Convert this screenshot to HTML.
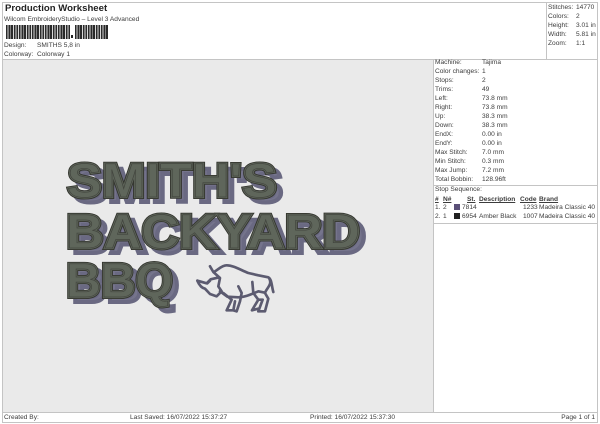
<!DOCTYPE html>
<html><head><meta charset="utf-8"><style>
html,body{margin:0;padding:0;background:#fff}
#p{position:relative;width:600px;height:424px;overflow:hidden;background:#fff;font-family:"Liberation Sans",sans-serif;font-size:6.6px;color:#3c3c3c}
#p div{position:absolute;white-space:nowrap;line-height:9px}
.l{background:#c4c4c4}
u{font-weight:bold}
.b{background:repeating-linear-gradient(90deg,#2a2a2a 0,#2a2a2a 1.7px,#d8d8d8 1.7px,#d8d8d8 2.6px)}
</style></head><body><div id="p">
<div class="l" style="left:2px;top:2px;width:596px;height:1px"></div>
<div class="l" style="left:2px;top:422px;width:596px;height:1px"></div>
<div class="l" style="left:2px;top:2px;width:1px;height:421px"></div>
<div class="l" style="left:597px;top:2px;width:1px;height:421px"></div>
<div style="left:3px;top:59px;width:430px;height:353px;background:#eaeaea"></div>
<div class="l" style="left:3px;top:59px;width:594px;height:1px"></div>
<div class="l" style="left:3px;top:412px;width:594px;height:1px"></div>
<div class="l" style="left:546px;top:2px;width:1px;height:57px"></div>
<div class="l" style="left:433px;top:59px;width:1px;height:353px"></div>
<div class="l" style="left:433px;top:185px;width:164px;height:1px"></div>
<div class="l" style="left:433px;top:223px;width:164px;height:1px"></div>

<div style="left:5px;top:3px;font-size:9.6px;line-height:12px;font-weight:bold;color:#222">Production Worksheet</div>
<div style="left:4px;top:15px">Wilcom EmbroideryStudio – Level 3 Advanced</div>
<div class="b" style="left:6px;top:25px;width:64px;height:14px"></div>
<div style="left:71px;top:35px;width:1.5px;height:3px;background:#222"></div>
<div class="b" style="left:75px;top:25px;width:33px;height:14px"></div>
<div style="left:4px;top:41px">Design:</div><div style="left:37px;top:41px">SMITHS 5,8 in</div>
<div style="left:4px;top:50px">Colorway:</div><div style="left:37px;top:50px">Colorway 1</div>

<div style="left:548px;top:3px">Stitches:</div><div style="left:576px;top:3px">14770</div>
<div style="left:548px;top:12px">Colors:</div><div style="left:576px;top:12px">2</div>
<div style="left:548px;top:21px">Height:</div><div style="left:576px;top:21px">3.01 in</div>
<div style="left:548px;top:30px">Width:</div><div style="left:576px;top:30px">5.81 in</div>
<div style="left:548px;top:39px">Zoom:</div><div style="left:576px;top:39px">1:1</div>

<div style="left:435px;top:58px">Machine:</div><div style="left:482px;top:58px">Tajima</div>
<div style="left:435px;top:67px">Color changes:</div><div style="left:482px;top:67px">1</div>
<div style="left:435px;top:76px">Stops:</div><div style="left:482px;top:76px">2</div>
<div style="left:435px;top:85px">Trims:</div><div style="left:482px;top:85px">49</div>
<div style="left:435px;top:94px">Left:</div><div style="left:482px;top:94px">73.8 mm</div>
<div style="left:435px;top:103px">Right:</div><div style="left:482px;top:103px">73.8 mm</div>
<div style="left:435px;top:112px">Up:</div><div style="left:482px;top:112px">38.3 mm</div>
<div style="left:435px;top:121px">Down:</div><div style="left:482px;top:121px">38.3 mm</div>
<div style="left:435px;top:130px">EndX:</div><div style="left:482px;top:130px">0.00 in</div>
<div style="left:435px;top:139px">EndY:</div><div style="left:482px;top:139px">0.00 in</div>
<div style="left:435px;top:148px">Max Stitch:</div><div style="left:482px;top:148px">7.0 mm</div>
<div style="left:435px;top:157px">Min Stitch:</div><div style="left:482px;top:157px">0.3 mm</div>
<div style="left:435px;top:166px">Max Jump:</div><div style="left:482px;top:166px">7.2 mm</div>
<div style="left:435px;top:175px">Total Bobbin:</div><div style="left:482px;top:175px">128.96ft</div>
<div style="left:435px;top:185px">Stop Sequence:</div>
<div style="left:435px;top:195px"><u>#</u></div><div style="left:443px;top:195px"><u>N#</u></div><div style="left:467px;top:195px"><u>St.</u></div><div style="left:479px;top:195px"><u>Description</u></div><div style="left:520px;top:195px"><u>Code</u></div><div style="left:539px;top:195px"><u>Brand</u></div>
<div style="left:435px;top:203px">1.</div><div style="left:443px;top:203px">2</div><div style="left:454px;top:204px;width:6px;height:6px;background:#5a5078"></div><div style="left:462px;top:203px">7814</div><div style="left:523px;top:203px">1233</div><div style="left:539px;top:203px">Madeira Classic 40</div>
<div style="left:435px;top:212px">2.</div><div style="left:443px;top:212px">1</div><div style="left:454px;top:213px;width:6px;height:6px;background:#222"></div><div style="left:462px;top:212px">6954</div><div style="left:479px;top:212px">Amber Black</div><div style="left:523px;top:212px">1007</div><div style="left:539px;top:212px">Madeira Classic 40</div>

<div style="left:4px;top:413px">Created By:</div>
<div style="left:130px;top:413px">Last Saved: 16/07/2022 15:37:27</div>
<div style="left:310px;top:413px">Printed: 16/07/2022 15:37:30</div>
<div style="left:490px;top:413px;width:105px;text-align:right">Page 1 of 1</div>

<svg style="position:absolute;left:0;top:0" width="600" height="424" font-family="Liberation Sans" font-weight="bold" font-size="48">
<g fill="#75748c" stroke="#6a6982" stroke-width="4" stroke-linejoin="miter" transform="translate(6,5)">
<text x="67" y="197" textLength="210" lengthAdjust="spacingAndGlyphs">SMITH'S</text>
<text x="66" y="248" textLength="294" lengthAdjust="spacingAndGlyphs">BACKYARD</text>
<text x="66" y="297" textLength="107" lengthAdjust="spacingAndGlyphs">BBQ</text>
</g>
<g fill="#34362f" stroke="#34362f" stroke-width="4" stroke-linejoin="miter">
<text x="67" y="197" textLength="210" lengthAdjust="spacingAndGlyphs">SMITH'S</text>
<text x="66" y="248" textLength="294" lengthAdjust="spacingAndGlyphs">BACKYARD</text>
<text x="66" y="297" textLength="107" lengthAdjust="spacingAndGlyphs">BBQ</text>
</g>
<g fill="#5f665b" stroke="#5f665b" stroke-width="2.2" stroke-linejoin="miter">
<text x="67" y="197" textLength="210" lengthAdjust="spacingAndGlyphs">SMITH'S</text>
<text x="66" y="248" textLength="294" lengthAdjust="spacingAndGlyphs">BACKYARD</text>
<text x="66" y="297" textLength="107" lengthAdjust="spacingAndGlyphs">BBQ</text>
</g>
<g fill="none" stroke="#43463f" stroke-width=".7">
<text x="67" y="197" textLength="210" lengthAdjust="spacingAndGlyphs">SMITH'S</text>
<text x="66" y="248" textLength="294" lengthAdjust="spacingAndGlyphs">BACKYARD</text>
<text x="66" y="297" textLength="107" lengthAdjust="spacingAndGlyphs">BBQ</text>
</g>
<g transform="translate(190,258) scale(.3333)" fill="none" stroke="#5c5b70" stroke-width="8" stroke-linejoin="round" stroke-linecap="round">
<path d="M22 68 C28 82 35 90 45 92 L60 108 L80 115 L95 100 L85 85 L90 60 L70 42 L60 25 M60 68 L52 76 M22 68 L50 76 L62 64 L88 58"/>
<path d="M75 40 C85 35 95 22 110 22 C130 22 150 35 175 45 L205 52 L235 58 C245 62 245 85 250 102"/>
<path d="M238 62 C248 80 228 92 225 105 L235 122 L225 160 L205 160 L218 125 L205 125 L186 157 L205 152"/>
<path d="M90 100 L112 116 L145 118 C165 118 185 108 205 100 L225 104"/>
<path d="M100 105 L125 125 L110 157 L130 157 L135 130 M145 85 L155 105 L150 130 L140 160 L130 157"/>
<path d="M187 72 L190 105 L205 125"/>
</g>
</svg>
</div></body></html>
